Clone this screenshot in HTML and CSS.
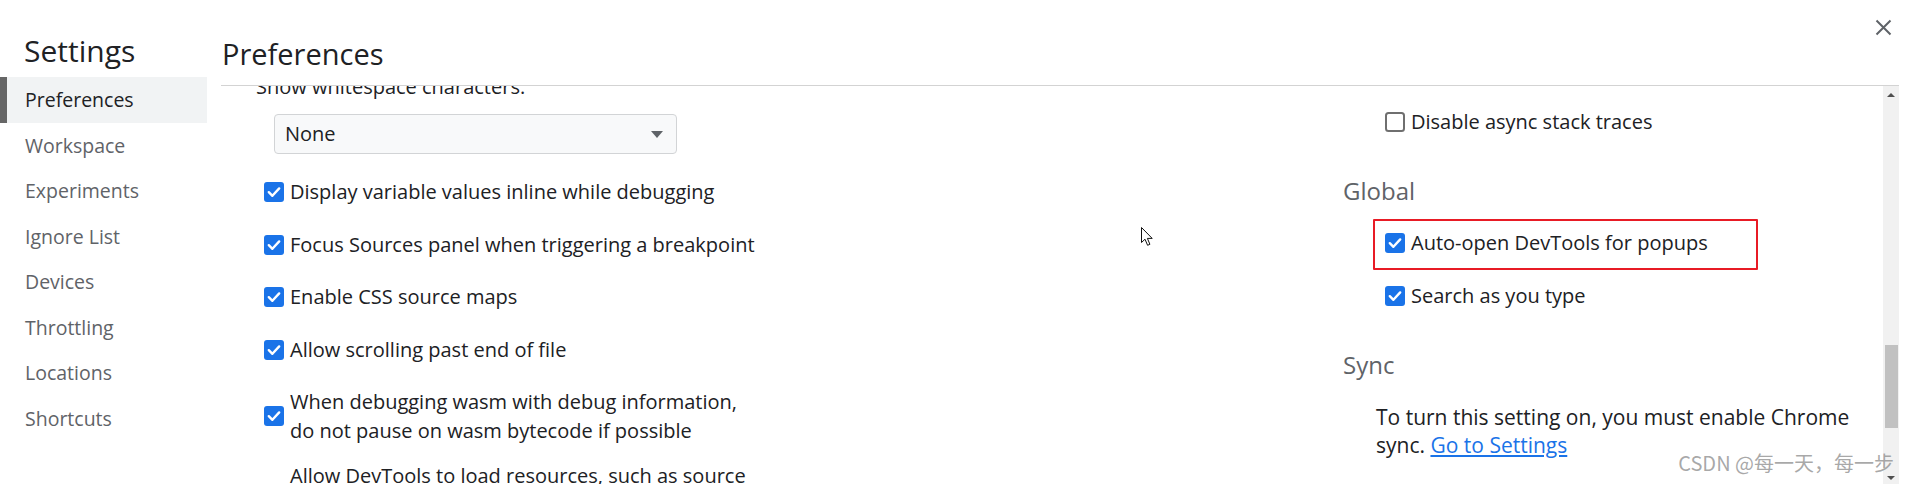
FILE: index.html
```html
<!DOCTYPE html>
<html lang="en">
<head>
<meta charset="utf-8">
<title>Settings</title>
<link rel="stylesheet" href="styles.css">
</head>
<body>
<div class="window">
  <aside class="sidebar">
    <h1 class="sidebar-title">Settings</h1>
    <nav class="nav">
      <div class="nav-item selected">Preferences</div>
      <div class="nav-item">Workspace</div>
      <div class="nav-item">Experiments</div>
      <div class="nav-item">Ignore List</div>
      <div class="nav-item">Devices</div>
      <div class="nav-item">Throttling</div>
      <div class="nav-item">Locations</div>
      <div class="nav-item">Shortcuts</div>
    </nav>
  </aside>
  <section class="main">
    <header class="main-header">
      <h2 class="main-title">Preferences</h2>
      <button class="close" aria-label="Close">
        <svg width="17" height="17" viewBox="0 0 17 17"><path d="M1.5 1.5 L15.5 15.5 M15.5 1.5 L1.5 15.5" stroke="#5f6368" stroke-width="2" fill="none"/></svg>
      </button>
    </header>
    <div class="body">
      <div class="scroll">
        <div class="columns">
          <div class="col col-left">
            <div class="ws-label">Show whitespace characters:</div>
            <div class="select"><span class="select-value">None</span><span class="select-arrow"></span></div>
            <div class="list">
              <label class="row"><span class="cb checked"><svg width="20" height="20" viewBox="0 0 20 20"><path d="M4.8 10.2 L8.4 13.8 L15.2 6.4" stroke="#fff" stroke-width="2.4" fill="none" stroke-linecap="round" stroke-linejoin="round"/></svg></span><span class="row-text">Display variable values inline while debugging</span></label>
              <label class="row"><span class="cb checked"><svg width="20" height="20" viewBox="0 0 20 20"><path d="M4.8 10.2 L8.4 13.8 L15.2 6.4" stroke="#fff" stroke-width="2.4" fill="none" stroke-linecap="round" stroke-linejoin="round"/></svg></span><span class="row-text">Focus Sources panel when triggering a breakpoint</span></label>
              <label class="row"><span class="cb checked"><svg width="20" height="20" viewBox="0 0 20 20"><path d="M4.8 10.2 L8.4 13.8 L15.2 6.4" stroke="#fff" stroke-width="2.4" fill="none" stroke-linecap="round" stroke-linejoin="round"/></svg></span><span class="row-text">Enable CSS source maps</span></label>
              <label class="row"><span class="cb checked"><svg width="20" height="20" viewBox="0 0 20 20"><path d="M4.8 10.2 L8.4 13.8 L15.2 6.4" stroke="#fff" stroke-width="2.4" fill="none" stroke-linecap="round" stroke-linejoin="round"/></svg></span><span class="row-text">Allow scrolling past end of file</span></label>
              <label class="row multi"><span class="cb checked"><svg width="20" height="20" viewBox="0 0 20 20"><path d="M4.8 10.2 L8.4 13.8 L15.2 6.4" stroke="#fff" stroke-width="2.4" fill="none" stroke-linecap="round" stroke-linejoin="round"/></svg></span><span class="row-text">When debugging wasm with debug information,<br>do not pause on wasm bytecode if possible</span></label>
              <div class="row plain"><span class="row-text">Allow DevTools to load resources, such as source</span></div>
            </div>
          </div>
          <div class="col col-right">
            <label class="row first"><span class="cb"></span><span class="row-text">Disable async stack traces</span></label>
            <h3 class="section-title">Global</h3>
            <label class="row highlighted after-title"><span class="cb checked"><svg width="20" height="20" viewBox="0 0 20 20"><path d="M4.8 10.2 L8.4 13.8 L15.2 6.4" stroke="#fff" stroke-width="2.4" fill="none" stroke-linecap="round" stroke-linejoin="round"/></svg></span><span class="row-text">Auto-open DevTools for popups</span></label>
            <label class="row"><span class="cb checked"><svg width="20" height="20" viewBox="0 0 20 20"><path d="M4.8 10.2 L8.4 13.8 L15.2 6.4" stroke="#fff" stroke-width="2.4" fill="none" stroke-linecap="round" stroke-linejoin="round"/></svg></span><span class="row-text">Search as you type</span></label>
            <h3 class="section-title sync-title">Sync</h3>
            <p class="sync-text">To turn this setting on, you must enable Chrome sync. <a class="link" href="#">Go to Settings</a></p>
          </div>
        </div>
      </div>
      <div class="scrollbar">
        <span class="sb-arrow sb-up"></span>
        <span class="sb-track"><span class="sb-thumb"></span></span>
        <span class="sb-arrow sb-down"></span>
      </div>
    </div>
  </section>
  <div class="watermark">CSDN @每一天，每一步</div>
  <svg class="cursor" width="13" height="20" viewBox="0 0 13 20"><path d="M0.5 0.5 L0.5 15.5 L4 12.2 L6.6 18.3 L8.9 17.3 L6.4 11.4 L11.2 11.4 Z" fill="#fff" stroke="#111" stroke-width="1" stroke-linejoin="miter"/></svg>
</div>
</body>
</html>
```
FILE: styles.css
```css
* { box-sizing: border-box; }
html, body { margin: 0; padding: 0; background: #fff; }
body {
  font-family: "Open Sans", "Noto Sans", "Noto Sans CJK SC", sans-serif;
  color: #202124;
}
.window {
  position: relative;
  width: 1910px;
  height: 484px;
  display: flex;
  overflow: hidden;
}
.sidebar {
  width: 207px;
  flex: none;
  padding-top: 31px;
}
.sidebar-title {
  margin: 0 0 6px 0;
  padding-left: 24px;
  font-size: 30px;
  line-height: 40px;
  font-weight: 400;
  color: #202124;
}
.nav { display: flex; flex-direction: column; }
.nav-item {
  height: 45.5px;
  line-height: 45px;
  padding-left: 25px;
  font-size: 19.5px;
  color: #5f6368;
}
.nav-item.selected {
  background: #f1f3f4;
  color: #202124;
  border-left: 7px solid #666;
  padding-left: 18px;
}
.main {
  flex: 1;
  margin-left: 14px;
  margin-right: 11px;
  display: flex;
  flex-direction: column;
  min-width: 0;
}
.main-header {
  height: 86px;
  flex: none;
  border-bottom: 1px solid #d3d3d3;
  display: flex;
  justify-content: space-between;
  align-items: flex-start;
  padding-left: 1px;
}
.main-title {
  margin: 0;
  padding-top: 34px;
  font-size: 29px;
  line-height: 40px;
  font-weight: 400;
  color: #202124;
}
.close {
  margin: 19px 7px 0 0;
  padding: 0;
  border: 0;
  background: none;
  width: 17px;
  height: 17px;
  display: flex;
}
.body {
  flex: 1;
  display: flex;
  min-height: 0;
}
.scroll {
  flex: 1;
  overflow: hidden;
  min-width: 0;
}
.columns {
  margin-top: -13px;
  padding-left: 1px;
  display: grid;
  grid-template-columns: 1121px 1fr;
  font-size: 20px;
}
.ws-label {
  padding-left: 34px;
  line-height: 28px;
}
.select {
  margin: 13px 0 0 52px;
  width: 403px;
  height: 40px;
  border: 1px solid #d2d4d6;
  border-radius: 4px;
  background: #f8f9fa;
  display: flex;
  align-items: center;
  justify-content: space-between;
  padding: 0 13px 0 10px;
}
.select-value { line-height: 28px; }
.select-arrow {
  width: 0;
  height: 0;
  border-left: 6px solid transparent;
  border-right: 6px solid transparent;
  border-top: 7px solid #5f6368;
  margin-top: 1px;
}
.list { margin-top: 12px; }
.row {
  position: relative;
  display: flex;
  align-items: center;
  gap: 6px;
  padding: 12px 0 12px 42px;
  line-height: 28.5px;
}
.row.multi {
  padding: 11px 0 5px 42px;
  line-height: 29px;
}
.row.plain { padding-left: 68px; }
.cb {
  width: 20px;
  height: 20px;
  flex: none;
  border-radius: 3.5px;
  border: 2px solid #6f6f6f;
  background: #fff;
  display: flex;
}
.cb.checked {
  border: 0;
  background: #1a73e8;
  border-radius: 3px;
}
.row.first { margin-top: 23px; }
.section-title {
  margin: 27.5px 0 0 0;
  font-size: 24px;
  line-height: 30px;
  font-weight: 400;
  color: #5f6368;
}
.row.after-title { margin-top: 11px; }
.sync-title { margin-top: 28px; }
.row.highlighted::after {
  content: "";
  position: absolute;
  left: 30px;
  top: 2px;
  width: 381px;
  height: 47px;
  border: 2px solid #e81b25;
  border-radius: 1px;
}
.sync-text {
  margin: 23px 0 0 0;
  padding-left: 33px;
  max-width: 533px;
  font-size: 21px;
  line-height: 28px;
}
.link { color: #1a73e8; text-decoration: underline; }
.scrollbar {
  width: 16px;
  flex: none;
  background: #f1f1f1;
  display: flex;
  flex-direction: column;
  align-items: center;
}
.sb-arrow {
  width: 0;
  height: 0;
  border-left: 4px solid transparent;
  border-right: 4px solid transparent;
}
.sb-up {
  border-bottom: 4px solid #505050;
  margin-top: 7px;
}
.sb-down {
  border-top: 4px solid #505050;
  margin-bottom: 4px;
}
.sb-track {
  flex: 1;
  width: 100%;
  display: flex;
  justify-content: center;
  padding-top: 248px;
}
.sb-thumb {
  width: 13px;
  height: 83px;
  background: #c1c1c1;
}
.watermark {
  position: absolute;
  right: 16px;
  bottom: 8px;
  font-family: "Noto Sans CJK SC", sans-serif;
  font-size: 20px;
  line-height: 26px;
  color: rgba(140, 140, 140, 0.75);
}
.cursor {
  position: absolute;
  left: 1141px;
  top: 227px;
}
```
